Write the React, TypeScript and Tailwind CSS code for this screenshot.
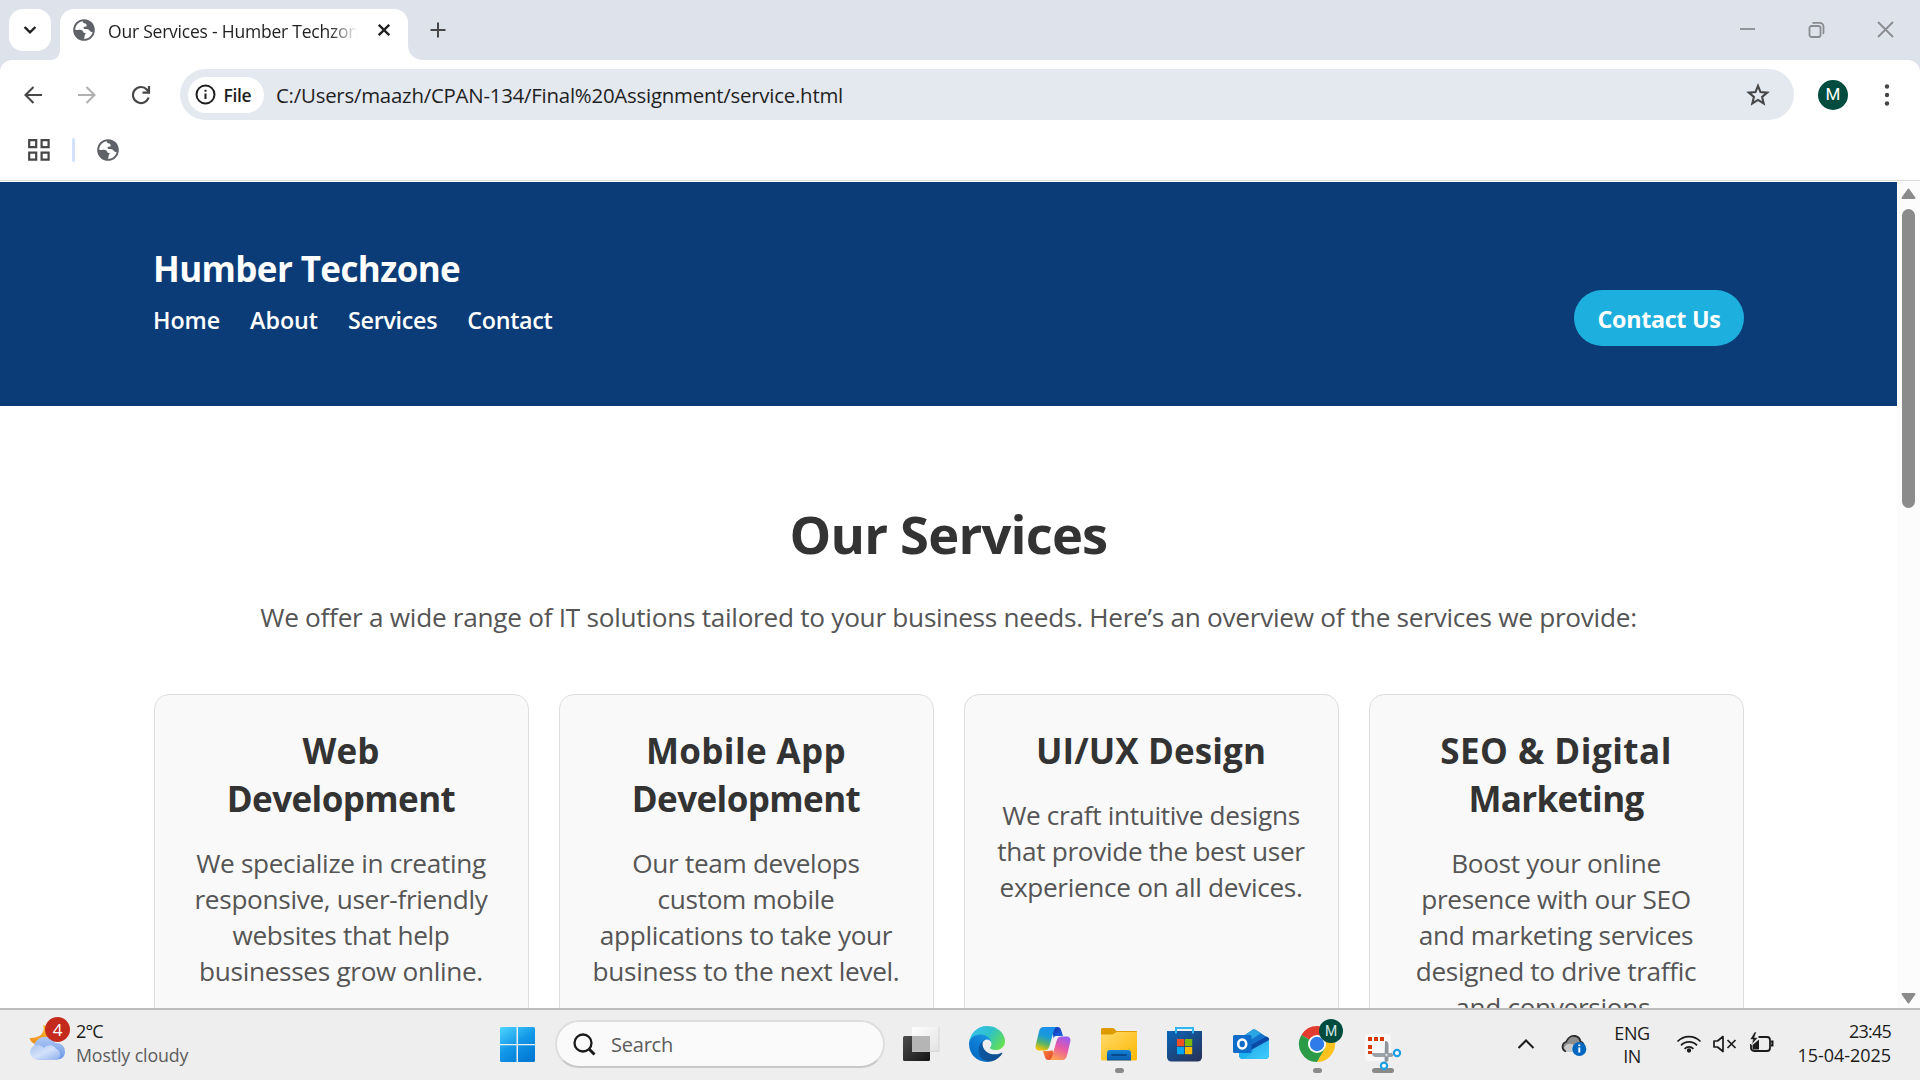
import React from 'react';

const services = [
  {
    title: [
      { t: 'Web', c: 'tracking-[0.004em]' },
      { t: 'Development', c: 'tracking-[-0.0168em]' },
    ],
    text: ['We specialize in creating', 'responsive, user-friendly', 'websites that help', 'businesses grow online.'],
  },
  {
    title: [
      { t: 'Mobile App', c: 'tracking-[0.0107em]' },
      { t: 'Development', c: 'tracking-[-0.0168em]' },
    ],
    text: ['Our team develops', 'custom mobile', 'applications to take your', 'business to the next level.'],
  },
  {
    title: [{ t: 'UI/UX Design', c: 'tracking-[0.003em]' }],
    text: ['We craft intuitive designs', 'that provide the best user', 'experience on all devices.'],
  },
  {
    title: [
      { t: 'SEO & Digital', c: 'tracking-[0.0143em]' },
      { t: 'Marketing', c: 'tracking-[-0.0185em]' },
    ],
    text: ['Boost your online', 'presence with our SEO', 'and marketing services', 'designed to drive traffic', 'and conversions.'],
  },
];

function Globe() {
  return (
    <svg width="22" height="22" viewBox="0 0 22 22" className="shrink-0">
      <circle cx="11" cy="11" r="10.8" fill="#5f6368" />
      <path
        d="M9.6 2.2C5.6 2.8 2.5 6.2 2.2 10.4c1.8.9 3.2.3 4.6.4 2 .1 3 .6 3.3 2 .2 1 1.1 1.3 2.4 1 .3 1.5-.6 2-.9 3-.2 1 .1 2-.9 2.9 4.400.3 8.200-2.600 9-7-1.700.6-2.500-.3-3.200-1.300-.8-1.200-2.400-1.500-4.300-1.500-1.200 0-1.900-.5-1.600-1.500.3-.9 1.300-.7 2.500-.9 1-.2.6-1.500.2-2.300C12.600 4 9.900 4.500 9.600 2.200z"
        fill="#fff"
      />
    </svg>
  );
}

function TabStrip() {
  return (
    <div className="flex h-[60px] shrink-0 items-start bg-[#dee2ea]">
      <div className="ml-[9px] mt-[9px] flex h-[42px] w-[42px] items-center justify-center rounded-[14px] bg-white">
        <svg width="14" height="10" viewBox="0 0 14 10" fill="none" stroke="#1f1f1f" strokeWidth="2.4">
          <path d="M1.600 2 7 7.400 12.400 2" />
        </svg>
      </div>
      <svg width="15" height="15" viewBox="0 0 15 15" className="mt-[45px] -mr-[6px]">
        <path d="M15 0v15H0C5 15 9 11 9 5V0z" fill="#fff" />
      </svg>
      <div className="mt-[9px] flex h-[51px] w-[348px] items-center rounded-t-[14px] bg-white pb-[9px] pl-[13px]">
        <Globe />
        <div className="mt-[2px] ml-[13px] w-[252px] overflow-hidden bg-[linear-gradient(to_right,#1f1f1f_88%,transparent_99%)] bg-clip-text text-[17.5px] leading-6 tracking-[-0.0125em] whitespace-nowrap text-transparent">
          Our Services - Humber Techzone
        </div>
        <svg width="12" height="12" viewBox="0 0 12 12" className="ml-[18px]" stroke="#1f1f1f" strokeWidth="2.300">
          <path d="M.8.8l10.400 10.400M11.200.8.8 11.200" />
        </svg>
      </div>
      <svg width="15" height="15" viewBox="0 0 15 15" className="mt-[45px]">
        <path d="M0 0v15h15C7 15 0 9 0 0z" fill="#fff" />
      </svg>
      <svg width="16" height="16" viewBox="0 0 16 16" className="mt-[22px] ml-[7px]" stroke="#474747" strokeWidth="2">
        <path d="M8 .5v15M.5 8h15" />
      </svg>
      <div className="mt-[21px] mr-[26px] ml-auto flex gap-[52px]">
        <svg width="17" height="17" viewBox="0 0 17 17" stroke="#8a8c90" strokeWidth="1.800">
          <path d="M1 8h15" />
        </svg>
        <svg width="17" height="17" viewBox="0 0 17 17" fill="none" stroke="#8a8c90" strokeWidth="1.800">
          <rect x="1.500" y="5" width="11" height="11" rx="2" />
          <path d="M4.500 2.300C5 1.800 5.500 1.800 6 1.800h5.500a4 4 0 0 1 4 4V11c0 .8-.2 1.400-.6 1.800" />
        </svg>
        <svg width="17" height="17" viewBox="0 0 17 17" stroke="#8a8c90" strokeWidth="1.800">
          <path d="M1 1l15 15M16 1 1 16" />
        </svg>
      </div>
    </div>
  );
}

function Toolbar() {
  return (
    <div className="bg-[#dee2ea]">
      <div className="flex h-[70px] items-center rounded-t-[12px] bg-white pb-px">
        <svg width="18" height="18" viewBox="0 0 18 18" className="ml-[24px]" fill="none" stroke="#474747" strokeWidth="2.100">
          <path d="M18 9H2M9.500 1 1.500 9l8 8" />
        </svg>
        <svg width="18" height="18" viewBox="0 0 18 18" className="ml-[36px]" fill="none" stroke="#b0b0b0" strokeWidth="2.100">
          <path d="M0 9h16M8.500 1l8 8-8 8" />
        </svg>
        <svg width="20" height="20" viewBox="0 0 20 20" className="ml-[35px]" fill="none" stroke="#474747" strokeWidth="2.200">
          <path d="M17.600 12.500A8 8 0 1 1 16 4.700L17.800 7" />
          <path d="M18 1v6.700h-6.500" />
        </svg>
        <div className="ml-[29px] flex h-[51px] w-[1614px] items-center rounded-full bg-[#e4e8ef] pl-[8px]">
          <div className="flex h-[36px] w-[76px] items-center rounded-full bg-white pl-[7px]">
            <svg width="21" height="21" viewBox="0 0 21 21" fill="none" stroke="#1f1f1f" strokeWidth="2">
              <circle cx="10.500" cy="10.500" r="9" />
              <path d="M10.500 9.500v5.500M10.500 5.700v2" />
            </svg>
            <span className="ml-[7.500px] text-[17.5px] leading-6 font-semibold tracking-[-0.02em] text-[#1f1f1f]">File</span>
          </div>
          <span className="ml-[12px] text-[20.4px] leading-7 tracking-[-0.011em] text-[#1f1f1f]">
            C:/Users/maazh/CPAN-134/Final%20Assignment/service.html
          </span>
          <svg width="24" height="24" viewBox="0 0 24 24" className="mr-[24px] ml-auto" fill="none" stroke="#474747" strokeWidth="2.100">
            <path d="M12 2.900l2.500 6.200 6.700.5-5.100 4.300 1.600 6.500L12 16.900l-5.700 3.500 1.600-6.500-5.100-4.300 6.700-.5z" />
          </svg>
        </div>
        <div className="mt-px ml-[24px] flex h-[30px] w-[30px] items-center justify-center rounded-full bg-[#004d40] font-[Roboto] text-[17px] text-white">M</div>
        <svg width="6" height="22" viewBox="0 0 6 22" className="mt-px ml-[36px]" fill="#474747">
          <circle cx="3" cy="2.500" r="2.200" />
          <circle cx="3" cy="11" r="2.200" />
          <circle cx="3" cy="19.500" r="2.200" />
        </svg>
      </div>
      <div className="flex h-[50px] items-center bg-white pb-[10px] pl-[28px]">
        <svg width="22" height="22" viewBox="0 0 22 22" fill="none" stroke="#474747" strokeWidth="2.200">
          <path d="M1.200 1.200h7v7h-7zM13.600 1.200h7v7h-7zM1.200 13.600h7v7h-7zM13.600 13.600h7v7h-7z" />
        </svg>
        <div className="ml-[22px] h-[24px] w-[3px] rounded-full bg-[#d3e3fd]" />
        <div className="ml-[22px]">
          <Globe />
        </div>
      </div>
      <div className="h-[2px] border-t border-[#dcdcdc] bg-white" />
    </div>
  );
}

function Page() {
  return (
    <div className="min-w-0 flex-1 overflow-hidden bg-white">
      <header className="flex h-[224px] justify-between bg-[#0b3c78] pt-[60px] pr-[153px] pl-[153px] text-white">
        <div className="pt-[2.500px]">
          <div className="text-[35px] leading-[48px] font-bold tracking-[-0.0175em]">Humber Techzone</div>
          <nav className="mt-[11px] flex gap-[30px] text-[23.3px] leading-8 font-semibold">
            <a className="tracking-[-0.004em]">Home</a>
            <a className="tracking-[-0.001em]">About</a>
            <a className="tracking-[-0.0127em]">Services</a>
            <a className="tracking-[-0.0128em]">Contact</a>
          </nav>
        </div>
        <button className="mt-[48px] h-[56px] w-[170px] rounded-full bg-[#1db0de] pt-[2px] text-[23.3px] leading-8 font-bold tracking-[-0.0135em]">
          Contact Us
        </button>
      </header>
      <main className="px-[153.500px] pt-[92px] text-center">
        <h1 className="text-[52.5px] leading-[72px] font-bold tracking-[-0.0155em] text-[#333]">Our Services</h1>
        <p className="mt-[29px] text-[26.2px] leading-9 tracking-[-0.0106em] whitespace-nowrap text-[#555]">
          We offer a wide range of IT solutions tailored to your business needs. Here’s an overview of the services we provide:
        </p>
        <div className="mt-[59px] grid grid-cols-4 gap-[30px]">
          {services.map((s, i) => (
            <article key={i} className="h-[400px] rounded-[15px] border border-[#ddd] bg-[#f9f9f9] pt-[32px]">
              <h3 className="text-[35px] leading-[48px] font-bold text-[#333]">
                {s.title.map((l) => (
                  <span key={l.t} className={`block ${l.c}`}>{l.t}</span>
                ))}
              </h3>
              <p className="mt-[22px] text-[26.2px] leading-9 tracking-[-0.0125em] text-[#555]">
                {s.text.map((l) => (
                  <span key={l} className="block whitespace-nowrap">{l}</span>
                ))}
              </p>
            </article>
          ))}
        </div>
      </main>
    </div>
  );
}

function Scrollbar() {
  return (
    <div className="flex w-[23px] shrink-0 flex-col items-center bg-[#fcfcfc] pt-[6px] pb-[4px]">
      <svg width="15" height="12" viewBox="0 0 15 12" fill="#8b8b8b" stroke="#8b8b8b" strokeWidth="2" strokeLinejoin="round">
        <path d="M7.500 1.500l6 8.500h-12z" />
      </svg>
      <div className="mt-[9px] h-[299px] w-[13px] rounded-full bg-[#8b8b8b]" />
      <svg width="15" height="12" viewBox="0 0 15 12" className="mt-auto" fill="#8b8b8b" stroke="#8b8b8b" strokeWidth="2" strokeLinejoin="round">
        <path d="M7.500 10.500l6-8.500h-12z" />
      </svg>
    </div>
  );
}

function WeatherIcon() {
  return (
    <svg width="36" height="28" viewBox="0 0 36 28" className="overflow-visible">
      <defs>
        <linearGradient id="moon" x1="0" y1="0" x2="0" y2="1">
          <stop offset="0" stopColor="#f8c02c" />
          <stop offset="1" stopColor="#f08a1c" />
        </linearGradient>
        <linearGradient id="cloudBack" x1="0" y1="0" x2="0" y2="1">
          <stop offset="0" stopColor="#b0c8f6" />
          <stop offset="1" stopColor="#6f9ae8" />
        </linearGradient>
        <linearGradient id="cloudFront" x1="0" y1="0" x2="1" y2="1">
          <stop offset="0" stopColor="#a9c3f0" />
          <stop offset=".5" stopColor="#d3e1fa" />
          <stop offset="1" stopColor="#8fb1ee" />
        </linearGradient>
      </defs>
      <path d="M14-7C17 1 10 6.500.5 6c1 3.500 4 6 8 6.500 6 0 13-6 12-12.500-.5-4-4-7-6.500-7z" fill="url(#moon)" />
      <path d="M6 20A10.500 10 0 0 1 26.500 11a8.500 8.500 0 0 1 9.500 8.500c0 5-3 8-8 8H8z" fill="url(#cloudBack)" />
      <path d="M7.500 13c3-.5 6 1 7.500 3 3-3.500 9-4 12 1 4 1 6 7 1.500 10.500H7.500A7.300 7.300 0 0 1 7.500 13z" fill="url(#cloudFront)" />
    </svg>
  );
}

function StartIcon() {
  return (
    <svg width="36" height="36" viewBox="0 0 36 36">
      <defs>
        <linearGradient id="win" gradientUnits="userSpaceOnUse" x1="2" y1="0" x2="26" y2="36">
          <stop offset="0" stopColor="#4cd2ff" />
          <stop offset=".5" stopColor="#1398e8" />
          <stop offset="1" stopColor="#0078d4" />
        </linearGradient>
      </defs>
      <path d="M1.500 0H16.500v17H0V1.500A1.500 1.500 0 0 1 1.500 0zM18 0h15.500A1.500 1.500 0 0 1 35 1.500V17H18zM0 18.200h16.500v16.800H1.500A1.500 1.500 0 0 1 0 33.500zM18 18.200h17v15.300a1.500 1.500 0 0 1-1.500 1.500H18z" fill="url(#win)" />
    </svg>
  );
}

function TaskViewIcon() {
  return (
    <svg width="36" height="36" viewBox="0 0 36 36">
      <defs>
        <linearGradient id="tvDark" x1="0" y1="0" x2="1" y2="1">
          <stop offset="0" stopColor="#4d4d4d" />
          <stop offset="1" stopColor="#151515" />
        </linearGradient>
        <linearGradient id="tvLight" x1="0" y1="0" x2="1" y2="1">
          <stop offset="0" stopColor="#fff" stopOpacity=".95" />
          <stop offset="1" stopColor="#e2e2e2" stopOpacity=".95" />
        </linearGradient>
      </defs>
      <rect x="0" y="10" width="27" height="25" rx="1.500" fill="url(#tvDark)" />
      <rect x="9" y="1" width="27" height="24.500" rx="1.500" fill="url(#tvLight)" />
      <path d="M9 10h18v15.500H9z" fill="#b5b5b5" />
      <path d="M9 25.300h27V1.500" stroke="#cfcfcf" fill="none" strokeWidth=".8" />
    </svg>
  );
}

function EdgeIcon() {
  return (
    <svg width="36" height="36" viewBox="0 0 256 256">
      <defs>
        <linearGradient id="edgeA" x1="0" y1="0" x2="1" y2="0">
          <stop offset="0" stopColor="#0c59a4" />
          <stop offset="1" stopColor="#114a8b" />
        </linearGradient>
        <linearGradient id="edgeB" x1=".8" y1="0" x2=".2" y2="1">
          <stop offset="0" stopColor="#1b9de2" />
          <stop offset=".4" stopColor="#1080d8" />
          <stop offset="1" stopColor="#0067c0" />
        </linearGradient>
        <linearGradient id="edgeC" x1="0" y1=".2" x2="1" y2=".7">
          <stop offset="0" stopColor="#35c1f1" />
          <stop offset=".5" stopColor="#2fc2c8" />
          <stop offset="1" stopColor="#66e04f" />
        </linearGradient>
      </defs>
      <path d="M231 190.500c-3.400 1.800-6.900 3.400-10.500 4.700a101.900 101.900 0 0 1-35.900 6.400c-47.300 0-88.500-32.500-88.500-74.300 0-11.400 6.400-21.900 16.600-27.500-42.800 1.800-53.800 46.400-53.800 72.500 0 74 68.100 81.400 82.800 81.400 7.900 0 19.800-2.300 27-4.600l1.300-.4a128.300 128.300 0 0 0 66.600-52.800 4 4 0 0 0-5.600-5.400z" fill="url(#edgeA)" />
      <path d="M105.700 241.400a79.200 79.200 0 0 1-22.700-21.300 80.700 80.700 0 0 1 29.500-120.200c3.200-1.500 8.500-4.100 15.600-4a32.400 32.400 0 0 1 25.700 13 31.900 31.900 0 0 1 6.300 18.700c0-.2 24.500-79.600-80-79.600C36.200 48 0 89.700 0 126.300a130.500 130.500 0 0 0 12.100 56 128 128 0 0 0 156.400 67 75.500 75.500 0 0 1-62.700-8z" fill="url(#edgeB)" />
      <path d="M152.300 148.900c-.9 1-3.400 2.500-3.400 5.600 0 2.600 1.700 5.100 4.700 7.200 14.400 10 41.500 8.700 41.600 8.700a59.600 59.600 0 0 0 30.300-8.400A61.400 61.400 0 0 0 256 109c.3-22.400-8-37.300-11.300-43.900C223.500 23.900 177.700 0 128 0A128 128 0 0 0 0 126.200C.5 89.700 36.800 60.200 80 60.200c3.500 0 23.500.3 42 10a72.600 72.600 0 0 1 30.900 29.300c6.100 10.600 7.200 24.100 7.200 29.500 0 5.300-2.700 13.300-7.800 19.900z" fill="url(#edgeC)" />
    </svg>
  );
}

function CopilotIcon() {
  return (
    <svg width="36" height="36" viewBox="0 0 36 36">
      <defs>
        <linearGradient id="cpA" x1=".6" y1="0" x2=".3" y2="1">
          <stop offset="0" stopColor="#1b8ff0" />
          <stop offset=".4" stopColor="#1a9bd8" />
          <stop offset=".7" stopColor="#57b36a" />
          <stop offset="1" stopColor="#f5c400" />
        </linearGradient>
        <linearGradient id="cpB" x1=".7" y1="0" x2=".3" y2="1">
          <stop offset="0" stopColor="#9b5cf0" />
          <stop offset=".45" stopColor="#e858a8" />
          <stop offset="1" stopColor="#ffa34f" />
        </linearGradient>
        <linearGradient id="cpC" x1="0" y1="0" x2="1" y2="1">
          <stop offset="0" stopColor="#1530a8" />
          <stop offset="1" stopColor="#1f6ff0" />
        </linearGradient>
        <linearGradient id="cpD" x1="0" y1="0" x2="1" y2="1">
          <stop offset="0" stopColor="#ff8a3c" />
          <stop offset="1" stopColor="#e0402c" />
        </linearGradient>
      </defs>
      <path d="M17 1h5.500c2 0 3 1.200 3.600 3l1.900 6h-5c-2.400 0-3.600 1-4.300 3z" fill="url(#cpC)" />
      <path d="M19 34h-5.500c-2 0-3-1.200-3.600-3L8 25h5c2.400 0 3.600-1 4.300-3z" fill="url(#cpD)" />
      <path d="M8.500 1H22c-1.800.6-2.600 2-3.200 4l-4.300 15c-.9 3.200-2.300 4.500-5.500 4.500H4.500C1 24.500 0 22 .8 19L4 5.500C4.700 2.700 6 1 8.500 1z" fill="url(#cpA)" />
      <path d="M27.500 34H14c1.800-.6 2.600-2 3.200-4l4.300-15c.9-3.200 2.300-4.500 5.500-4.500h4.500c3.500 0 4.500 2.500 3.700 5.500L32 29.500c-.7 2.800-2 4.500-4.500 4.500z" fill="url(#cpB)" />
      <path d="M18.800 11.500c.6-1 1.500-1.500 3-1.500h3c-2 .8-2.700 2-3.300 4l-3.200 10.500h-4.200c.4-.5.700-1.200 1-2z" fill="#f2f2f4" />
    </svg>
  );
}

function FolderIcon() {
  return (
    <svg width="36" height="36" viewBox="0 0 36 36">
      <defs>
        <linearGradient id="fol" x1="0" y1="0" x2="1" y2="1">
          <stop offset="0" stopColor="#ffd96b" />
          <stop offset="1" stopColor="#fcb900" />
        </linearGradient>
        <linearGradient id="folBlue" x1="0" y1="0" x2="0" y2="1">
          <stop offset="0" stopColor="#1482d8" />
          <stop offset="1" stopColor="#0a5cae" />
        </linearGradient>
      </defs>
      <path d="M1.500 2H11c1.500 0 2 .4 3 1.500L15.500 5H35a1 1 0 0 1 1 1v6H0V3.500A1.500 1.500 0 0 1 1.500 2z" fill="#dd9b00" />
      <path d="M0 8.500h11c2 0 3-2.500 5-2.500h20V33a1.500 1.500 0 0 1-1.500 1.500h-33A1.500 1.500 0 0 1 0 33z" fill="url(#fol)" />
      <path d="M6 34.500V27a3 3 0 0 1 3-3h18a3 3 0 0 1 3 3v7.500z" fill="url(#folBlue)" />
      <path d="M11 29h14" stroke="#064a8c" strokeWidth="1.800" strokeLinecap="round" />
    </svg>
  );
}

function StoreIcon() {
  return (
    <svg width="36" height="36" viewBox="0 0 36 36">
      <defs>
        <linearGradient id="store" x1="0" y1="0" x2=".8" y2="1">
          <stop offset="0" stopColor="#0a66b8" />
          <stop offset="1" stopColor="#25345c" />
        </linearGradient>
      </defs>
      <path d="M0 5h35v26a4.500 4.500 0 0 1-4.500 4.500h-26A4.500 4.500 0 0 1 0 31z" fill="url(#store)" />
      <path d="M9 7.500V2h17v5.500" fill="none" stroke="#2fb8f5" strokeWidth="2" />
      <path d="M10 13h7.200v7.200H10z" fill="#f25022" />
      <path d="M18 13h7.200v7.200H18z" fill="#7fba00" />
      <path d="M10 21h7.200v7.200H10z" fill="#00a4ef" />
      <path d="M18 21h7.200v7.200H18z" fill="#ffb900" />
    </svg>
  );
}

function OutlookIcon() {
  return (
    <svg width="36" height="36" viewBox="0 0 36 36">
      <defs>
        <linearGradient id="olA" x1="0" y1="0" x2="1" y2="1">
          <stop offset="0" stopColor="#1f9ae0" />
          <stop offset="1" stopColor="#3fd0ff" />
        </linearGradient>
      </defs>
      <path d="M6 13 19.500 3.700a2.500 2.500 0 0 1 3 0L36 12.500V29a4 4 0 0 1-4 4H10a4 4 0 0 1-4-4z" fill="#1272cc" />
      <path d="M10 11l9.500-7.300a2.500 2.500 0 0 1 3 0l5.500 3.600L13 17z" fill="#2aa6e4" />
      <path d="M18 19 33.500 10.500l2 1.300c.7 1 .5 3 .5 3L18 26z" fill="#0a4aa6" />
      <path d="M36 14v15a4 4 0 0 1-4 4H10a4 4 0 0 1-3.500-2.500z" fill="url(#olA)" />
      <path d="M6 24l16 0-11 9a4.500 4.500 0 0 1-5-4z" fill="#1cb4ee" />
      <rect x="0" y="9" width="18.500" height="18" rx="1.500" fill="#0f6cc8" />
      <ellipse cx="9.200" cy="18" rx="4" ry="4.500" fill="none" stroke="#fff" strokeWidth="2.600" />
    </svg>
  );
}

function ChromeIcon() {
  return (
    <svg width="36" height="36" viewBox="0 0 36 36">
      <path d="M18 18 2.400 9A18 18 0 0 1 33.600 9L34 10z" fill="#e33b2e" />
      <path d="M18 18 2.400 9A18 18 0 0 0 18 36l8-13z" fill="#2b9b48" />
      <path d="M18 36a18 18 0 0 0 15.600-27H18l7.800 13.500z" fill="#fcc31e" />
      <path d="M18 9h15.600l-7 3z" fill="#e33b2e" />
      <circle cx="18" cy="18" r="9" fill="#fff" />
      <circle cx="18" cy="18" r="7.200" fill="#2f7bea" />
    </svg>
  );
}

function SnipIcon() {
  return (
    <svg width="36" height="36" viewBox="0 0 36 36">
      <rect x="0" y="8" width="26" height="27" rx="3" fill="#f7f7f8" />
      <path d="M3 13h17" stroke="#d83b01" strokeWidth="4" strokeDasharray="4 2" fill="none" />
      <path d="M5 17v11" stroke="#d83b01" strokeWidth="4" strokeDasharray="4 2" strokeDashoffset="-2" fill="none" />
      <path d="M20 15c2.500 0 3.500 1.500 3.500 4v15.500l-2.500 2-1.500-2z" fill="#8e959c" />
      <path d="M7 27c0 2.500 1.500 4 4 4h16l1.500-2-1.500-2z" fill="#9aa1a8" />
      <circle cx="21.500" cy="29" r="1.200" fill="#d9dcdf" />
      <circle cx="32" cy="27" r="3.100" fill="#fff" stroke="#1d9fe6" strokeWidth="2.200" />
      <circle cx="19" cy="39.700" r="3.100" fill="#fff" stroke="#1d9fe6" strokeWidth="2.200" />
    </svg>
  );
}

function AppSlot({ children, mark }: { children: React.ReactNode; mark?: string }) {
  return (
    <div className="relative flex h-full w-[66px] items-center justify-center pb-[2px] [&_svg]:overflow-visible">
      {mark && <div className={`absolute bottom-[7px] h-[5px] rounded-full bg-[#8a8a8a] ${mark}`} />}
      <div className="relative">{children}</div>
    </div>
  );
}

function Taskbar() {
  return (
    <div className="flex h-[72px] shrink-0 items-stretch border-t-2 border-[#bdbdbd] bg-[#eee] text-[18px] leading-6 text-[#1b1b1b]">
      <div className="flex w-[500px] items-start pl-[29px]">
        <div className="relative mt-[22px]">
          <WeatherIcon />
          <div className="absolute -top-[15px] left-[16px] flex h-[25px] w-[25px] items-center justify-center rounded-full bg-[#c42b1c] text-[17px] text-white">4</div>
        </div>
        <div className="mt-[9px] ml-[11px]">
          <div className="tracking-[-0.05em]">2°C</div>
          <div className="text-[17.8px] tracking-[-0.007em] text-[#5c5c5c]">Mostly cloudy</div>
        </div>
      </div>
      <div className="flex items-center pb-[2px]">
        <div className="mt-[2px]">
          <StartIcon />
        </div>
        <div className="ml-[19px] flex h-[48px] w-[330px] items-center rounded-full border-2 border-[#dedede] border-b-[#c8c8c8] bg-[#fafafa] pl-[16px]">
          <svg width="23" height="23" viewBox="0 0 23 23" fill="none" stroke="#1b1b1b" strokeWidth="2.300">
            <circle cx="10" cy="10" r="8.500" />
            <path d="m16 16 5.500 5.500" strokeWidth="3" />
          </svg>
          <span className="mt-px ml-[15px] text-[20px] tracking-[-0.011em] text-[#5c5c5c]">Search</span>
        </div>
      </div>
      <div className="ml-[3px] flex">
        <AppSlot><TaskViewIcon /></AppSlot>
        <AppSlot><EdgeIcon /></AppSlot>
        <AppSlot><CopilotIcon /></AppSlot>
        <AppSlot mark="w-[9px]"><FolderIcon /></AppSlot>
        <AppSlot><StoreIcon /></AppSlot>
        <AppSlot><OutlookIcon /></AppSlot>
        <AppSlot mark="w-[9px]">
          <ChromeIcon />
          <div className="absolute -top-[7px] left-[20px] flex h-[24px] w-[24px] items-center justify-center rounded-full bg-[#004d40] font-[Roboto] text-[14px] text-[#d5e5e2]">M</div>
        </AppSlot>
        <AppSlot mark="w-[22px]"><SnipIcon /></AppSlot>
      </div>
      <div className="mr-[29px] ml-auto flex items-start">
        <svg width="18" height="12" viewBox="0 0 18 12" className="mt-[28px]" fill="none" stroke="#1b1b1b" strokeWidth="2">
          <path d="M1.500 10 9 2.500l7.500 7.500" />
        </svg>
        <svg width="26" height="24" viewBox="0 0 26 24" className="mt-[24px] ml-[26px]">
          <path d="M5 17.500a5 5 0 0 1 0-9.500C7 3 11 1.500 14 2c3.500.6 5 3 5.500 5.500 2 .5 3 2 3 4" fill="#8e8e8e" stroke="#2b2b2b" strokeWidth="1.800" />
          <path d="M3 14c2-5 8-6 12-1l-4 5H6z" fill="#c9c9c9" />
          <circle cx="18.300" cy="15" r="7" fill="#0067c0" />
          <path d="M18.300 13.500v5M18.300 10.500v1.800" stroke="#fff" strokeWidth="2" />
        </svg>
        <div className="mt-[12px] ml-[25px] w-[40px] text-center leading-[23px] tracking-[-0.024em]">
          <div>ENG</div>
          <div>IN</div>
        </div>
        <svg width="26" height="20" viewBox="0 0 26 20" className="mt-[24px] ml-[24px]" fill="none" stroke="#1b1b1b" strokeWidth="1.700">
          <path d="M1.500 7.500a16 16 0 0 1 23 0M5 11.300a11 11 0 0 1 16 0M8.600 14.800a6.200 6.200 0 0 1 8.800 0" />
          <circle cx="13" cy="16.500" r="1.300" fill="#1b1b1b" />
        </svg>
        <svg width="24" height="18" viewBox="0 0 24 18" className="mt-[25px] ml-[11px]" fill="none" stroke="#1b1b1b" strokeWidth="1.700">
          <path d="M1 6v6h3.500L10 16.500v-15L4.500 6z" strokeLinejoin="round" />
          <path d="M14.500 5l8 8M22.500 5l-8 8" />
        </svg>
        <svg width="26" height="20" viewBox="0 0 26 20" className="mt-[22px] ml-[12px]" fill="none" stroke="#1b1b1b" strokeWidth="1.800">
          <path d="M9.500 5H18a3 3 0 0 1 3 3v8a3 3 0 0 1-3 3H5a3 3 0 0 1-3-3v-4" />
          <path d="M22 9.500h1.500v4H22" strokeWidth="2" />
          <path d="M3.500 17.500V13L10 7.500v10z" fill="#1b1b1b" stroke="none" />
          <path d="M5.500 0 1 7.500h3L2.500 13 9 5.500H5.500L7.500 0z" fill="#1b1b1b" stroke="#eee" strokeWidth=".6" />
        </svg>
        <div className="mt-[9px] ml-[19px] w-[97px] text-right whitespace-nowrap">
          <div className="tracking-[-0.042em]">23:45</div>
          <div className="tracking-[-0.002em]">15-04-2025</div>
        </div>
      </div>
    </div>
  );
}

export default function App() {
  return (
    <div className="flex h-[1080px] w-[1920px] flex-col overflow-hidden bg-white font-['Open_Sans',sans-serif]">
      <TabStrip />
      <Toolbar />
      <div className="flex min-h-0 flex-1">
        <Page />
        <Scrollbar />
      </div>
      <Taskbar />
    </div>
  );
}
